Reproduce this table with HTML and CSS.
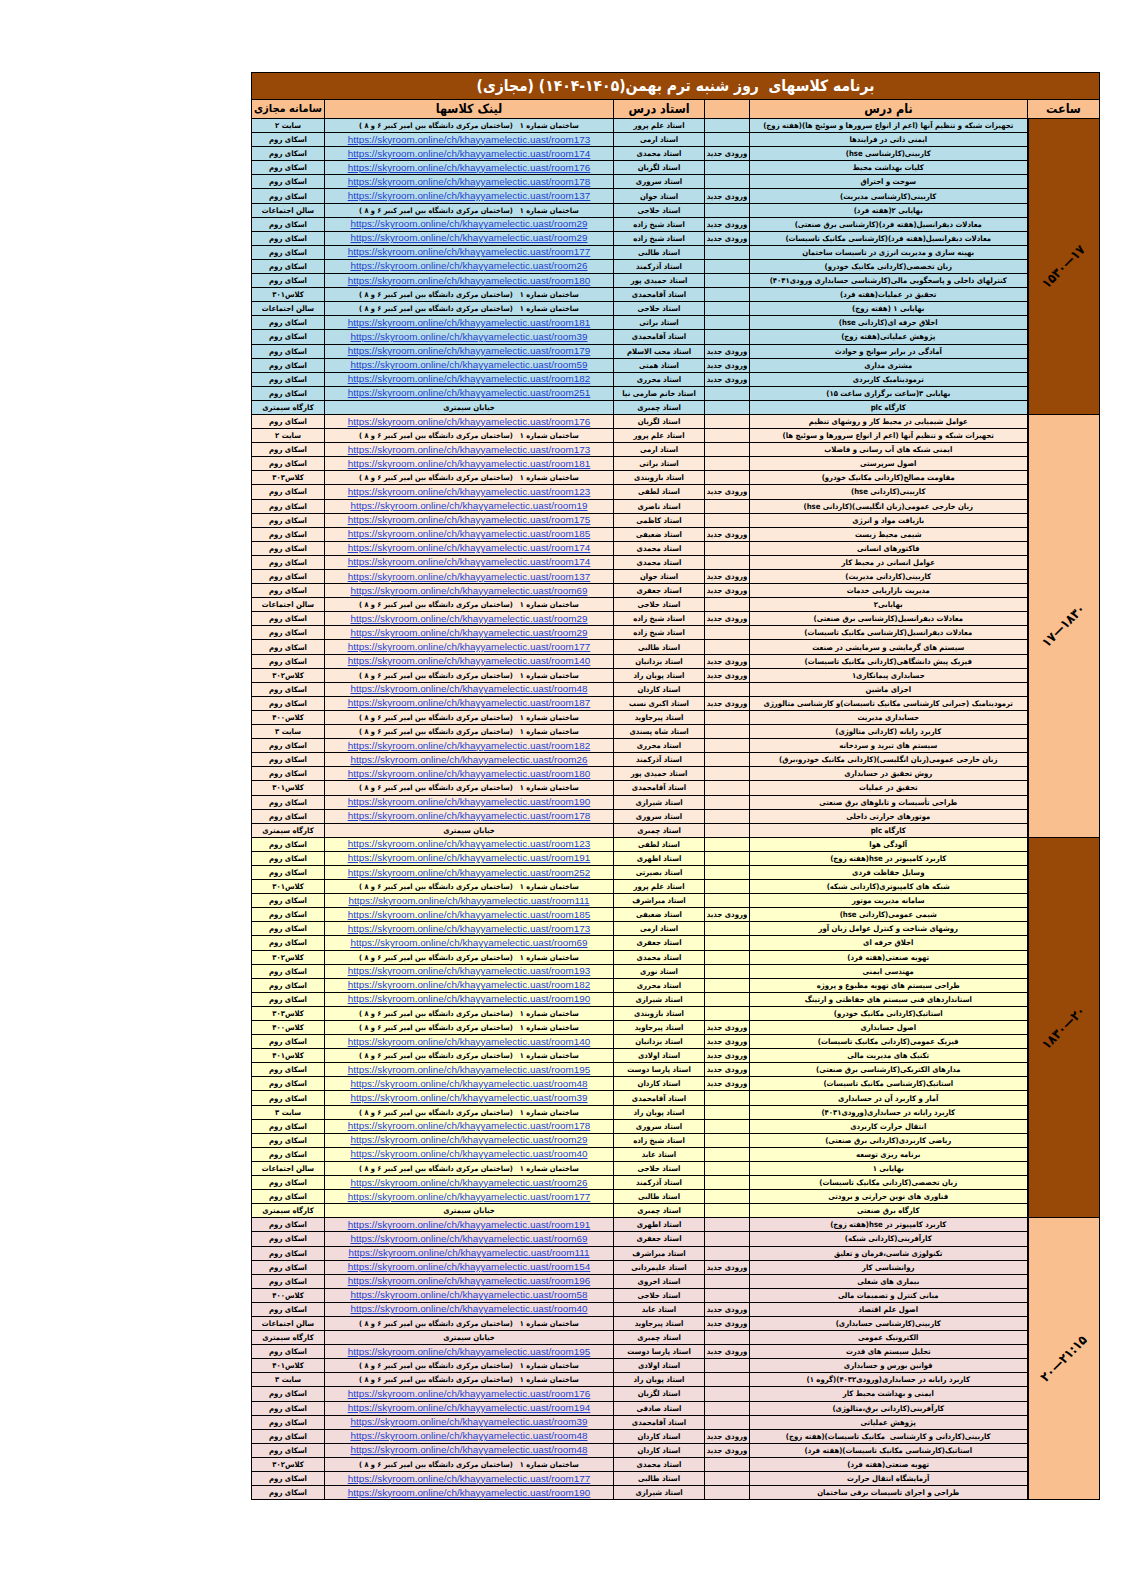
FILE: index.html
```html
<!DOCTYPE html>
<html lang="fa">
<head>
<meta charset="utf-8">
<title>برنامه کلاسهای روز شنبه</title>
<link rel="stylesheet" href="styles.css">
</head>
<body>
<div class="page">
<table class="sched">
<colgroup><col class="c-time"><col class="c-name"><col class="c-new"><col class="c-teacher"><col class="c-link"><col class="c-sys"></colgroup>
<thead>
<tr class="title"><th colspan="6">برنامه کلاسهای&nbsp; روز شنبه ترم بهمن(۱۴۰۵-۱۴۰۴) (مجازی)</th></tr>
<tr class="head"><th>ساعت</th><th>نام درس</th><th></th><th>استاد درس</th><th>لینک کلاسها</th><th class="sys">سامانه مجازی</th></tr>
</thead>
<tbody class="g1">
<tr><td class="time dark" rowspan="21"><span>۱۵۳۰—۱۷</span></td><td>تجهیزات شبکه و تنظیم آنها (اعم از انواع سرورها و سوئیچ ها)(هفته زوج)</td><td></td><td>استاد علم پرور</td><td><span class="b">ساختمان شماره ۱ &nbsp; (ساختمان مرکزی دانشگاه بین امیر کبیر ۶ و ۸ )</span></td><td>سایت ۲</td></tr>
<tr><td>ایمنی ذاتی در فرایندها</td><td></td><td>استاد ارمی</td><td><a href="#">https://skyroom.online/ch/khayyamelectic.uast/room173</a></td><td>اسکای روم</td></tr>
<tr><td>کاربینی(کارشناسی hse)</td><td>ورودی جدید</td><td>استاد محمدی</td><td><a href="#">https://skyroom.online/ch/khayyamelectic.uast/room174</a></td><td>اسکای روم</td></tr>
<tr><td>کلیات بهداشت محیط</td><td></td><td>استاد لگزیان</td><td><a href="#">https://skyroom.online/ch/khayyamelectic.uast/room176</a></td><td>اسکای روم</td></tr>
<tr><td>سوخت و احتراق</td><td></td><td>استاد سروری</td><td><a href="#">https://skyroom.online/ch/khayyamelectic.uast/room178</a></td><td>اسکای روم</td></tr>
<tr><td>کاربینی(کارشناسی مدیریت)</td><td>ورودی جدید</td><td>استاد جوان</td><td><a href="#">https://skyroom.online/ch/khayyamelectic.uast/room137</a></td><td>اسکای روم</td></tr>
<tr><td>بهایابی ۲(هفته فرد)</td><td></td><td>استاد حلاجی</td><td><span class="b">ساختمان شماره ۱ &nbsp; (ساختمان مرکزی دانشگاه بین امیر کبیر ۶ و ۸ )</span></td><td>سالن اجتماعات</td></tr>
<tr><td>معادلات دیفرانسیل(هفته فرد)(کارشناسی برق صنعتی)</td><td>ورودی جدید</td><td>استاد شیخ زاده</td><td><a href="#">https://skyroom.online/ch/khayyamelectic.uast/room29</a></td><td>اسکای روم</td></tr>
<tr><td>معادلات دیفرانسیل(هفته فرد)(کارشناسی مکانیک تاسیسات)</td><td>ورودی جدید</td><td>استاد شیخ زاده</td><td><a href="#">https://skyroom.online/ch/khayyamelectic.uast/room29</a></td><td>اسکای روم</td></tr>
<tr><td>بهینه سازی و مدیریت انرژی در تاسیسات ساختمان</td><td></td><td>استاد طالبی</td><td><a href="#">https://skyroom.online/ch/khayyamelectic.uast/room177</a></td><td>اسکای روم</td></tr>
<tr><td>زبان تخصصی(کاردانی مکانیک خودرو)</td><td></td><td>استاد آذرکمند</td><td><a href="#">https://skyroom.online/ch/khayyamelectic.uast/room26</a></td><td>اسکای روم</td></tr>
<tr><td>کنترلهای داخلی و پاسخگویی مالی(کارشناسی حسابداری ورودی۴۰۴۱)</td><td></td><td>استاد حمیدی پور</td><td><a href="#">https://skyroom.online/ch/khayyamelectic.uast/room180</a></td><td>اسکای روم</td></tr>
<tr><td>تحقیق در عملیات(هفته فرد)</td><td></td><td>استاد آقامحمدی</td><td><span class="b">ساختمان شماره ۱ &nbsp; (ساختمان مرکزی دانشگاه بین امیر کبیر ۶ و ۸ )</span></td><td>کلاس۳۰۱</td></tr>
<tr><td>بهایابی ۱ (هفته زوج)</td><td></td><td>استاد حلاجی</td><td><span class="b">ساختمان شماره ۱ &nbsp; (ساختمان مرکزی دانشگاه بین امیر کبیر ۶ و ۸ )</span></td><td>سالن اجتماعات</td></tr>
<tr><td>اخلاق حرفه ای(کاردانی hse)</td><td></td><td>استاد براتی</td><td><a href="#">https://skyroom.online/ch/khayyamelectic.uast/room181</a></td><td>اسکای روم</td></tr>
<tr><td>پژوهش عملیاتی(هفته زوج)</td><td></td><td>استاد آقامحمدی</td><td><a href="#">https://skyroom.online/ch/khayyamelectic.uast/room39</a></td><td>اسکای روم</td></tr>
<tr><td>آمادگی در برابر سوانح و حوادث</td><td>ورودی جدید</td><td>استاد محب الاسلام</td><td><a href="#">https://skyroom.online/ch/khayyamelectic.uast/room179</a></td><td>اسکای روم</td></tr>
<tr><td>مشتری مداری</td><td>ورودی جدید</td><td>استاد همتی</td><td><a href="#">https://skyroom.online/ch/khayyamelectic.uast/room59</a></td><td>اسکای روم</td></tr>
<tr><td>ترمودینامیک کاربردی</td><td>ورودی جدید</td><td>استاد محرری</td><td><a href="#">https://skyroom.online/ch/khayyamelectic.uast/room182</a></td><td>اسکای روم</td></tr>
<tr><td>بهایابی ۳(ساعت برگزاری ساعت ۱۵)</td><td></td><td>استاد خانم صارمی نیا</td><td><a href="#">https://skyroom.online/ch/khayyamelectic.uast/room251</a></td><td>اسکای روم</td></tr>
<tr><td>کارگاه plc</td><td></td><td>استاد چمبری</td><td>خیابان سیمتری</td><td>کارگاه سیمتری</td></tr>
</tbody>
<tbody class="g2">
<tr><td class="time light" rowspan="30"><span>۱۷—۱۸۳۰</span></td><td>عوامل شیمیایی در محیط کار و روشهای تنظیم</td><td></td><td>استاد لگزیان</td><td><a href="#">https://skyroom.online/ch/khayyamelectic.uast/room176</a></td><td>اسکای روم</td></tr>
<tr><td>تجهیزات شبکه و تنظیم آنها (اعم از انواع سرورها و سوئیچ ها)</td><td></td><td>استاد علم پرور</td><td><span class="b">ساختمان شماره ۱ &nbsp; (ساختمان مرکزی دانشگاه بین امیر کبیر ۶ و ۸ )</span></td><td>سایت ۲</td></tr>
<tr><td>ایمنی شبکه های آب رسانی و فاضلاب</td><td></td><td>استاد ارمی</td><td><a href="#">https://skyroom.online/ch/khayyamelectic.uast/room173</a></td><td>اسکای روم</td></tr>
<tr><td>اصول سرپرستی</td><td></td><td>استاد براتی</td><td><a href="#">https://skyroom.online/ch/khayyamelectic.uast/room181</a></td><td>اسکای روم</td></tr>
<tr><td>مقاومت مصالح(کاردانی مکانیک خودرو)</td><td></td><td>استاد بازوبندی</td><td><span class="b">ساختمان شماره ۱ &nbsp; (ساختمان مرکزی دانشگاه بین امیر کبیر ۶ و ۸ )</span></td><td>کلاس۳۰۳</td></tr>
<tr><td>کاربینی(کاردانی hse)</td><td>ورودی جدید</td><td>استاد لطفی</td><td><a href="#">https://skyroom.online/ch/khayyamelectic.uast/room123</a></td><td>اسکای روم</td></tr>
<tr><td>زبان خارجی عمومی(زبان انگلیسی)(کاردانی hse)</td><td></td><td>استاد ناصری</td><td><a href="#">https://skyroom.online/ch/khayyamelectic.uast/room19</a></td><td>اسکای روم</td></tr>
<tr><td>بازیافت مواد و انرژی</td><td></td><td>استاد کاظمی</td><td><a href="#">https://skyroom.online/ch/khayyamelectic.uast/room175</a></td><td>اسکای روم</td></tr>
<tr><td>شیمی محیط زیست</td><td>ورودی جدید</td><td>استاد ضعیفی</td><td><a href="#">https://skyroom.online/ch/khayyamelectic.uast/room185</a></td><td>اسکای روم</td></tr>
<tr><td>فاکتورهای انسانی</td><td></td><td>استاد محمدی</td><td><a href="#">https://skyroom.online/ch/khayyamelectic.uast/room174</a></td><td>اسکای روم</td></tr>
<tr><td>عوامل انسانی در محیط کار</td><td></td><td>استاد محمدی</td><td><a href="#">https://skyroom.online/ch/khayyamelectic.uast/room174</a></td><td>اسکای روم</td></tr>
<tr><td>کاربینی(کاردانی مدیریت)</td><td>ورودی جدید</td><td>استاد جوان</td><td><a href="#">https://skyroom.online/ch/khayyamelectic.uast/room137</a></td><td>اسکای روم</td></tr>
<tr><td>مدیریت بازاریابی خدمات</td><td>ورودی جدید</td><td>استاد جعفری</td><td><a href="#">https://skyroom.online/ch/khayyamelectic.uast/room69</a></td><td>اسکای روم</td></tr>
<tr><td>بهایابی۲</td><td></td><td>استاد حلاجی</td><td><span class="b">ساختمان شماره ۱ &nbsp; (ساختمان مرکزی دانشگاه بین امیر کبیر ۶ و ۸ )</span></td><td>سالن اجتماعات</td></tr>
<tr><td>معادلات دیفرانسیل(کارشناسی برق صنعتی)</td><td>ورودی جدید</td><td>استاد شیخ زاده</td><td><a href="#">https://skyroom.online/ch/khayyamelectic.uast/room29</a></td><td>اسکای روم</td></tr>
<tr><td>معادلات دیفرانسیل(کارشناسی مکانیک تاسیسات)</td><td></td><td>استاد شیخ زاده</td><td><a href="#">https://skyroom.online/ch/khayyamelectic.uast/room29</a></td><td>اسکای روم</td></tr>
<tr><td>سیستم های گرمایشی و سرمایشی در صنعت</td><td></td><td>استاد طالبی</td><td><a href="#">https://skyroom.online/ch/khayyamelectic.uast/room177</a></td><td>اسکای روم</td></tr>
<tr><td>فیزیک پیش دانشگاهی(کاردانی مکانیک تاسیسات)</td><td>ورودی جدید</td><td>استاد یزدانیان</td><td><a href="#">https://skyroom.online/ch/khayyamelectic.uast/room140</a></td><td>اسکای روم</td></tr>
<tr><td>حسابداری پیمانکاری۱</td><td>ورودی جدید</td><td>استاد پویان راد</td><td><span class="b">ساختمان شماره ۱ &nbsp; (ساختمان مرکزی دانشگاه بین امیر کبیر ۶ و ۸ )</span></td><td>کلاس۳۰۲</td></tr>
<tr><td>اجزای ماشین</td><td></td><td>استاد کاردان</td><td><a href="#">https://skyroom.online/ch/khayyamelectic.uast/room48</a></td><td>اسکای روم</td></tr>
<tr><td>ترمودینامیک (جبرانی کارشناسی مکانیک تاسیسات)و کارشناسی متالورژی</td><td>ورودی جدید</td><td>استاد اکبری نسب</td><td><a href="#">https://skyroom.online/ch/khayyamelectic.uast/room187</a></td><td>اسکای روم</td></tr>
<tr><td>حسابداری مدیریت</td><td></td><td>استاد پیرجاوید</td><td><span class="b">ساختمان شماره ۱ &nbsp; (ساختمان مرکزی دانشگاه بین امیر کبیر ۶ و ۸ )</span></td><td>کلاس۴۰۰</td></tr>
<tr><td>کاربرد رایانه (کاردانی متالوژی)</td><td></td><td>استاد شاه پسندی</td><td><span class="b">ساختمان شماره ۱ &nbsp; (ساختمان مرکزی دانشگاه بین امیر کبیر ۶ و ۸ )</span></td><td>سایت ۳</td></tr>
<tr><td>سیستم های تبرید و سردخانه</td><td></td><td>استاد محرری</td><td><a href="#">https://skyroom.online/ch/khayyamelectic.uast/room182</a></td><td>اسکای روم</td></tr>
<tr><td>زبان خارجی عمومی(زبان انگلیسی)(کاردانی مکانیک خودرو،برق)</td><td></td><td>استاد آذرکمند</td><td><a href="#">https://skyroom.online/ch/khayyamelectic.uast/room26</a></td><td>اسکای روم</td></tr>
<tr><td>روش تحقیق در حسابداری</td><td></td><td>استاد حمیدی پور</td><td><a href="#">https://skyroom.online/ch/khayyamelectic.uast/room180</a></td><td>اسکای روم</td></tr>
<tr><td>تحقیق در عملیات</td><td></td><td>استاد آقامحمدی</td><td><span class="b">ساختمان شماره ۱ &nbsp; (ساختمان مرکزی دانشگاه بین امیر کبیر ۶ و ۸ )</span></td><td>کلاس۳۰۱</td></tr>
<tr><td>طراحی تأسیسات و تابلوهای برق صنعتی</td><td></td><td>استاد شیرازی</td><td><a href="#">https://skyroom.online/ch/khayyamelectic.uast/room190</a></td><td>اسکای روم</td></tr>
<tr><td>موتورهای حرارتی داخلی</td><td></td><td>استاد سروری</td><td><a href="#">https://skyroom.online/ch/khayyamelectic.uast/room178</a></td><td>اسکای روم</td></tr>
<tr><td>کارگاه plc</td><td></td><td>استاد چمبری</td><td>خیابان سیمتری</td><td>کارگاه سیمتری</td></tr>
</tbody>
<tbody class="g3">
<tr><td class="time dark" rowspan="27"><span>۱۸۳۰—۲۰</span></td><td>آلودگی هوا</td><td></td><td>استاد لطفی</td><td><a href="#">https://skyroom.online/ch/khayyamelectic.uast/room123</a></td><td>اسکای روم</td></tr>
<tr><td>کاربرد کامپیوتر در hse(هفته زوج)</td><td></td><td>استاد اطهری</td><td><a href="#">https://skyroom.online/ch/khayyamelectic.uast/room191</a></td><td>اسکای روم</td></tr>
<tr><td>وسایل حفاظت فردی</td><td></td><td>استاد بصیرتی</td><td><a href="#">https://skyroom.online/ch/khayyamelectic.uast/room252</a></td><td>اسکای روم</td></tr>
<tr><td>شبکه های کامپیوتری(کاردانی شبکه)</td><td></td><td>استاد علم پرور</td><td><span class="b">ساختمان شماره ۱ &nbsp; (ساختمان مرکزی دانشگاه بین امیر کبیر ۶ و ۸ )</span></td><td>کلاس۳۰۱</td></tr>
<tr><td>سامانه مدیریت موتور</td><td></td><td>استاد میراشرف</td><td><a href="#">https://skyroom.online/ch/khayyamelectic.uast/room111</a></td><td>اسکای روم</td></tr>
<tr><td>شیمی عمومی(کاردانی hse)</td><td>ورودی جدید</td><td>استاد ضعیفی</td><td><a href="#">https://skyroom.online/ch/khayyamelectic.uast/room185</a></td><td>اسکای روم</td></tr>
<tr><td>روشهای شناخت و کنترل عوامل زیان آور</td><td></td><td>استاد ارمی</td><td><a href="#">https://skyroom.online/ch/khayyamelectic.uast/room173</a></td><td>اسکای روم</td></tr>
<tr><td>اخلاق حرفه ای</td><td></td><td>استاد جعفری</td><td><a href="#">https://skyroom.online/ch/khayyamelectic.uast/room69</a></td><td>اسکای روم</td></tr>
<tr><td>تهویه صنعتی(هفته فرد)</td><td></td><td>استاد محمدی</td><td><span class="b">ساختمان شماره ۱ &nbsp; (ساختمان مرکزی دانشگاه بین امیر کبیر ۶ و ۸ )</span></td><td>کلاس۳۰۲</td></tr>
<tr><td>مهندسی ایمنی</td><td></td><td>استاد نوری</td><td><a href="#">https://skyroom.online/ch/khayyamelectic.uast/room193</a></td><td>اسکای روم</td></tr>
<tr><td>طراحی سیستم های تهویه مطبوع و پروژه</td><td></td><td>استاد محرری</td><td><a href="#">https://skyroom.online/ch/khayyamelectic.uast/room182</a></td><td>اسکای روم</td></tr>
<tr><td>استانداردهای فنی سیستم های حفاظتی و ارتینگ</td><td></td><td>استاد شیرازی</td><td><a href="#">https://skyroom.online/ch/khayyamelectic.uast/room190</a></td><td>اسکای روم</td></tr>
<tr><td>استاتیک(کاردانی مکانیک خودرو)</td><td></td><td>استاد بازوبندی</td><td><span class="b">ساختمان شماره ۱ &nbsp; (ساختمان مرکزی دانشگاه بین امیر کبیر ۶ و ۸ )</span></td><td>کلاس۳۰۳</td></tr>
<tr><td>اصول حسابداری</td><td>ورودی جدید</td><td>استاد پیرجاوید</td><td><span class="b">ساختمان شماره ۱ &nbsp; (ساختمان مرکزی دانشگاه بین امیر کبیر ۶ و ۸ )</span></td><td>کلاس۴۰۰</td></tr>
<tr><td>فیزیک عمومی(کاردانی مکانیک تاسیسات)</td><td>ورودی جدید</td><td>استاد یزدانیان</td><td><a href="#">https://skyroom.online/ch/khayyamelectic.uast/room140</a></td><td>اسکای روم</td></tr>
<tr><td>تکنیک های مدیریت مالی</td><td>ورودی جدید</td><td>استاد اولادی</td><td><span class="b">ساختمان شماره ۱ &nbsp; (ساختمان مرکزی دانشگاه بین امیر کبیر ۶ و ۸ )</span></td><td>کلاس۴۰۱</td></tr>
<tr><td>مدارهای الکتریکی(کارشناسی برق صنعتی)</td><td>ورودی جدید</td><td>استاد پارسا دوست</td><td><a href="#">https://skyroom.online/ch/khayyamelectic.uast/room195</a></td><td>اسکای روم</td></tr>
<tr><td>استاتیک(کارشناسی مکانیک تاسیسات)</td><td>ورودی جدید</td><td>استاد کاردان</td><td><a href="#">https://skyroom.online/ch/khayyamelectic.uast/room48</a></td><td>اسکای روم</td></tr>
<tr><td>آمار و کاربرد آن در حسابداری</td><td></td><td>استاد آقامحمدی</td><td><a href="#">https://skyroom.online/ch/khayyamelectic.uast/room39</a></td><td>اسکای روم</td></tr>
<tr><td>کاربرد رایانه در حسابداری(ورودی۴۰۳۱)</td><td></td><td>استاد پویان راد</td><td><span class="b">ساختمان شماره ۱ &nbsp; (ساختمان مرکزی دانشگاه بین امیر کبیر ۶ و ۸ )</span></td><td>سایت ۳</td></tr>
<tr><td>انتقال حرارت کاربردی</td><td></td><td>استاد سروری</td><td><a href="#">https://skyroom.online/ch/khayyamelectic.uast/room178</a></td><td>اسکای روم</td></tr>
<tr><td>ریاضی کاربردی(کاردانی برق صنعتی)</td><td></td><td>استاد شیخ زاده</td><td><a href="#">https://skyroom.online/ch/khayyamelectic.uast/room29</a></td><td>اسکای روم</td></tr>
<tr><td>برنامه ریزی توسعه</td><td></td><td>استاد عابد</td><td><a href="#">https://skyroom.online/ch/khayyamelectic.uast/room40</a></td><td>اسکای روم</td></tr>
<tr><td>بهایابی ۱</td><td></td><td>استاد حلاجی</td><td><span class="b">ساختمان شماره ۱ &nbsp; (ساختمان مرکزی دانشگاه بین امیر کبیر ۶ و ۸ )</span></td><td>سالن اجتماعات</td></tr>
<tr><td>زبان تخصصی(کاردانی مکانیک تاسیسات)</td><td></td><td>استاد آذرکمند</td><td><a href="#">https://skyroom.online/ch/khayyamelectic.uast/room26</a></td><td>اسکای روم</td></tr>
<tr><td>فناوری های نوین حرارتی و برودتی</td><td></td><td>استاد طالبی</td><td><a href="#">https://skyroom.online/ch/khayyamelectic.uast/room177</a></td><td>اسکای روم</td></tr>
<tr><td>کارگاه برق صنعتی</td><td></td><td>استاد چمبری</td><td>خیابان سیمتری</td><td>کارگاه سیمتری</td></tr>
</tbody>
<tbody class="g4">
<tr><td class="time light" rowspan="20"><span>۲۰—۲۱:۱۵</span></td><td>کاربرد کامپیوتر در hse(هفته زوج)</td><td></td><td>استاد اطهری</td><td><a href="#">https://skyroom.online/ch/khayyamelectic.uast/room191</a></td><td>اسکای روم</td></tr>
<tr><td>کارآفرینی(کاردانی شبکه)</td><td></td><td>استاد جعفری</td><td><a href="#">https://skyroom.online/ch/khayyamelectic.uast/room69</a></td><td>اسکای روم</td></tr>
<tr><td>تکنولوژی شاسی،فرمان و تعلیق</td><td></td><td>استاد میراشرف</td><td><a href="#">https://skyroom.online/ch/khayyamelectic.uast/room111</a></td><td>اسکای روم</td></tr>
<tr><td>روانشناسی کار</td><td>ورودی جدید</td><td>استاد علیمردانی</td><td><a href="#">https://skyroom.online/ch/khayyamelectic.uast/room154</a></td><td>اسکای روم</td></tr>
<tr><td>بیماری های شغلی</td><td></td><td>استاد اخروی</td><td><a href="#">https://skyroom.online/ch/khayyamelectic.uast/room196</a></td><td>اسکای روم</td></tr>
<tr><td>مبانی کنترل و تصمیمات مالی</td><td></td><td>استاد حلاجی</td><td><a href="#">https://skyroom.online/ch/khayyamelectic.uast/room58</a></td><td>کلاس۴۰۰</td></tr>
<tr><td>اصول علم اقتصاد</td><td>ورودی جدید</td><td>استاد عابد</td><td><a href="#">https://skyroom.online/ch/khayyamelectic.uast/room40</a></td><td>اسکای روم</td></tr>
<tr><td>کاربینی(کارشناسی حسابداری)</td><td>ورودی جدید</td><td>استاد پیرجاوید</td><td><span class="b">ساختمان شماره ۱ &nbsp; (ساختمان مرکزی دانشگاه بین امیر کبیر ۶ و ۸ )</span></td><td>سالن اجتماعات</td></tr>
<tr><td>الکترونیک عمومی</td><td></td><td>استاد چمبری</td><td>خیابان سیمتری</td><td>کارگاه سیمتری</td></tr>
<tr><td>تحلیل سیستم های قدرت</td><td>ورودی جدید</td><td>استاد پارسا دوست</td><td><a href="#">https://skyroom.online/ch/khayyamelectic.uast/room195</a></td><td>اسکای روم</td></tr>
<tr><td>قوانین بورس و حسابداری</td><td></td><td>استاد اولادی</td><td><span class="b">ساختمان شماره ۱ &nbsp; (ساختمان مرکزی دانشگاه بین امیر کبیر ۶ و ۸ )</span></td><td>کلاس۴۰۱</td></tr>
<tr><td>کاربرد رایانه در حسابداری(ورودی۴۰۳۲)(گروه ۱)</td><td></td><td>استاد پویان راد</td><td><span class="b">ساختمان شماره ۱ &nbsp; (ساختمان مرکزی دانشگاه بین امیر کبیر ۶ و ۸ )</span></td><td>سایت ۳</td></tr>
<tr><td>ایمنی و بهداشت محیط کار</td><td></td><td>استاد لگزیان</td><td><a href="#">https://skyroom.online/ch/khayyamelectic.uast/room176</a></td><td>اسکای روم</td></tr>
<tr><td>کارآفرینی(کاردانی برق،متالوژی)</td><td></td><td>استاد صادقی</td><td><a href="#">https://skyroom.online/ch/khayyamelectic.uast/room194</a></td><td>اسکای روم</td></tr>
<tr><td>پژوهش عملیاتی</td><td></td><td>استاد آقامحمدی</td><td><a href="#">https://skyroom.online/ch/khayyamelectic.uast/room39</a></td><td>اسکای روم</td></tr>
<tr><td>کاربینی(کاردانی و کارشناسی&nbsp; مکانیک تاسیسات)(هفته زوج)</td><td>ورودی جدید</td><td>استاد کاردان</td><td><a href="#">https://skyroom.online/ch/khayyamelectic.uast/room48</a></td><td>اسکای روم</td></tr>
<tr><td>استاتیک(کارشناسی مکانیک تاسیسات)(هفته فرد)</td><td>ورودی جدید</td><td>استاد کاردان</td><td><a href="#">https://skyroom.online/ch/khayyamelectic.uast/room48</a></td><td>اسکای روم</td></tr>
<tr><td>تهویه صنعتی(هفته فرد)</td><td></td><td>استاد محمدی</td><td><span class="b">ساختمان شماره ۱ &nbsp; (ساختمان مرکزی دانشگاه بین امیر کبیر ۶ و ۸ )</span></td><td>کلاس۳۰۲</td></tr>
<tr><td>آزمایشگاه انتقال حرارت</td><td></td><td>استاد طالبی</td><td><a href="#">https://skyroom.online/ch/khayyamelectic.uast/room177</a></td><td>اسکای روم</td></tr>
<tr><td>طراحی و اجرای تاسیسات برقی ساختمان</td><td></td><td>استاد شیرازی</td><td><a href="#">https://skyroom.online/ch/khayyamelectic.uast/room190</a></td><td>اسکای روم</td></tr>
</tbody>
</table>
</div>
</body>
</html>
```

FILE: styles.css
```css
html, body {
  margin: 0;
  padding: 0;
  background: #ffffff;
}

.page {
  padding: 72px 0 0 251px;
}

.sched {
  direction: rtl;
  border-collapse: collapse;
  table-layout: fixed;
  width: 848px;
  font-family: "DejaVu Sans Condensed", "DejaVu Sans", sans-serif;
  font-stretch: condensed;
  font-weight: bold;
  font-size: 7.7px;
  color: #000000;
}

.c-time { width: 72px; }
.c-name { width: 278px; }
.c-new { width: 45px; }
.c-teacher { width: 91px; }
.c-link { width: 289px; }
.c-sys { width: 73px; }

.sched th,
.sched td {
  border: 1px solid #000000;
  padding: 0 1px;
  text-align: center;
  vertical-align: middle;
  white-space: nowrap;
  overflow: hidden;
}

.sched tbody tr {
  height: 14.1px;
}

.sched tbody td {
  line-height: 11px;
}

.title th {
  height: 26px;
  background: #984807;
  color: #ffffff;
  font-size: 15.5px;
  line-height: 23px;
}

.head th {
  height: 18px;
  background: #fabf8f;
  font-size: 12.5px;
  line-height: 16px;
}

.head th.sys {
  font-size: 11px;
}

.g1 td { background: #b7dee8; }
.g2 td { background: #fde9d9; }
.g3 td { background: #ffffcc; }
.g4 td { background: #f2dcdb; }

.sched td.time {
  border-left: 2px solid #000000;
  font-size: 13px;
}

.sched td.dark { background: #984807; }
.sched td.light { background: #fabf8f; }

.time span {
  display: inline-block;
  direction: ltr;
  unicode-bidi: isolate;
  transform: rotate(-45deg);
  white-space: nowrap;
}

.sched a {
  font-family: "Liberation Sans", Arial, sans-serif;
  font-stretch: normal;
  font-weight: normal;
  font-size: 9.9px;
  color: #1f3fd1;
  text-decoration: underline;
}

.b {
  font-size: 7.4px;
}
```
